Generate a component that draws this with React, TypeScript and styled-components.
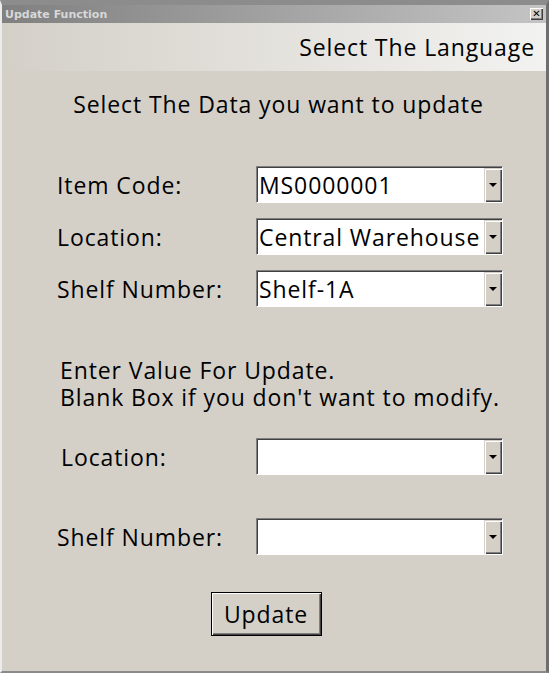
import React from "react";
import styled, { createGlobalStyle } from "styled-components";

const Global = createGlobalStyle`
  html, body { margin: 0; padding: 0; background: #d4d0c8; }
  * { box-sizing: border-box; }
`;

const Window = styled.div`
  width: 549px;
  height: 673px;
  display: flex;
  flex-direction: column;
  background: #d4d0c8;
  border-top: 5px solid #8c8c8c;
  border-left: 2px solid #ececec;
  border-right: 3px solid #6e6e6e;
  border-bottom: 2px solid #8a8a8a;
  font-family: "Open Sans", "Noto Sans", sans-serif;
  font-size: 23px;
  letter-spacing: 0.9px;
  color: #000;
`;

const TitleBar = styled.div`
  height: 18px;
  flex: none;
  display: flex;
  align-items: center;
  justify-content: space-between;
  padding: 0 3px 0 3px;
  background: linear-gradient(to right, #808080, #c4c4c4);
  letter-spacing: 0;
`;

const TitleText = styled.span`
  font-family: "DejaVu Sans", sans-serif;
  font-weight: bold;
  font-size: 11px;
  color: #d8d8d8;
`;

const CloseButton = styled.div`
  width: 13px;
  height: 12px;
  background: #d4d0c8;
  box-shadow: inset 1px 1px #fff, inset -1px -1px #404040, inset -2px -2px #808080;
  display: flex;
  align-items: center;
  justify-content: center;
  font-family: "DejaVu Sans", sans-serif;
  font-size: 10px;
  line-height: 1;
  color: #000;
`;

const Header = styled.div`
  height: 48px;
  flex: none;
  display: flex;
  align-items: center;
  justify-content: flex-end;
  padding-right: 11px;
  background: linear-gradient(to right, #d4d0c8, #f2f2f0);
`;

const Body = styled.div`
  flex: 1;
  display: flex;
  flex-direction: column;
`;

const Subtitle = styled.div`
  margin-top: 18px;
  text-align: center;
  line-height: 30px;
  padding-left: 9px;
`;

const FormGrid = styled.div<{ $rowGap: number; $top: number }>`
  display: grid;
  grid-template-columns: 199px 247px;
  grid-auto-rows: 37px;
  row-gap: ${(p) => p.$rowGap}px;
  margin-top: ${(p) => p.$top}px;
  padding-left: 55px;
`;

const Label = styled.div<{ $indent?: number }>`
  display: flex;
  align-items: center;
  padding-left: ${(p) => p.$indent ?? 0}px;
  white-space: nowrap;
`;

const Combo = styled.div`
  display: flex;
  background: #fff;
  border: 1px solid;
  border-color: #808080 #ffffff #ffffff #808080;
  box-shadow: inset 1px 1px #404040;
  padding: 1px 0 0 1px;
`;

const ComboText = styled.div`
  flex: 1;
  display: flex;
  align-items: center;
  padding-left: 1px;
  white-space: nowrap;
  overflow: hidden;
`;

const DropButton = styled.div`
  width: 18px;
  flex: none;
  background: #d4d0c8;
  box-shadow: inset 1px 1px #d4d0c8, inset 2px 2px #fff, inset -1px -1px #404040, inset -2px -2px #808080;
  display: flex;
  align-items: center;
  justify-content: center;
`;

const Arrow = styled.div`
  width: 0;
  height: 0;
  border-left: 4px solid transparent;
  border-right: 4px solid transparent;
  border-top: 4px solid #000;
`;

const Instructions = styled.div`
  margin-top: 50px;
  padding-left: 58px;
  display: flex;
  flex-direction: column;
`;

const InstructionLine = styled.div`
  height: 27px;
  line-height: 27px;
  white-space: nowrap;
`;

const ButtonRow = styled.div`
  display: flex;
  justify-content: center;
  margin-top: 37px;
  padding-right: 16px;
`;

const Button = styled.div`
  width: 111px;
  height: 44px;
  display: flex;
  align-items: center;
  justify-content: center;
  background: #d4d0c8;
  border: 1px solid #000;
  box-shadow: inset 1px 1px #fff, inset -1px -1px #404040, inset -2px -2px #808080;
`;

const ComboBox = ({ value }: { value?: string }) => (
  <Combo>
    <ComboText>{value}</ComboText>
    <DropButton>
      <Arrow />
    </DropButton>
  </Combo>
);

export default function App() {
  return (
    <>
      <Global />
      <Window>
        <TitleBar>
          <TitleText>Update Function</TitleText>
          <CloseButton>✕</CloseButton>
        </TitleBar>
        <Header>Select The Language</Header>
        <Body>
          <Subtitle>Select The Data you want to update</Subtitle>
          <FormGrid $rowGap={15} $top={47}>
            <Label>Item Code:</Label>
            <ComboBox value="MS0000001" />
            <Label>Location:</Label>
            <ComboBox value="Central Warehouse" />
            <Label>Shelf Number:</Label>
            <ComboBox value="Shelf-1A" />
          </FormGrid>
          <Instructions>
            <InstructionLine>Enter Value For Update.</InstructionLine>
            <InstructionLine>Blank Box if you don't want to modify.</InstructionLine>
          </Instructions>
          <FormGrid $rowGap={43} $top={27}>
            <Label $indent={4}>Location:</Label>
            <ComboBox />
            <Label>Shelf Number:</Label>
            <ComboBox />
          </FormGrid>
          <ButtonRow>
            <Button>Update</Button>
          </ButtonRow>
        </Body>
      </Window>
    </>
  );
}
